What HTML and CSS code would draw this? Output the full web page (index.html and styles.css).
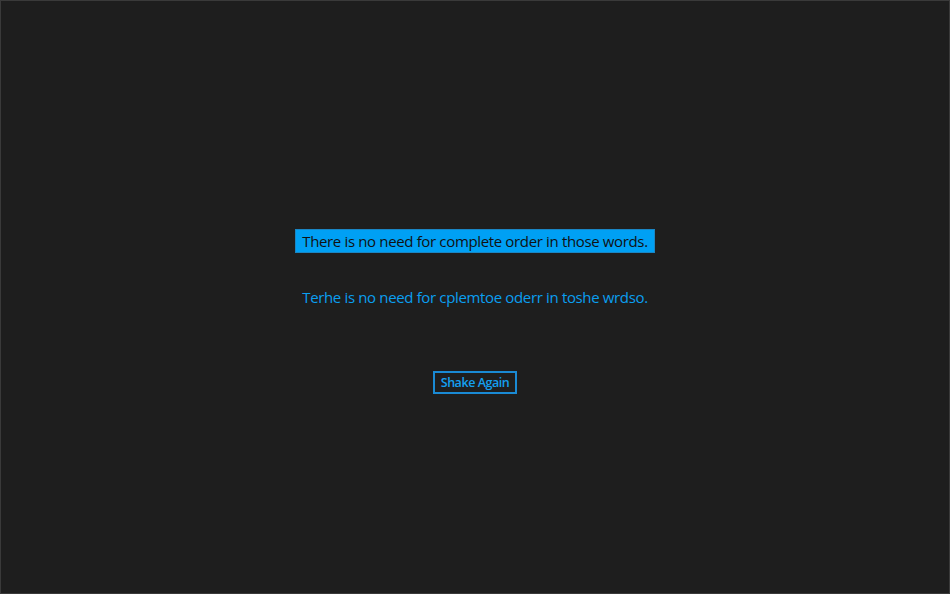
FILE: index.html
```html
<!DOCTYPE html>
<html>
<head>
<meta charset="utf-8">
<link rel="stylesheet" href="styles.css">
</head>
<body>
<main class="app">
  <div class="original">There is no need for complete order in those words.</div>
  <div class="shaken">Terhe is no need for cplemtoe oderr in toshe wrdso.</div>
  <button class="shake">Shake Again</button>
</main>
</body>
</html>
```
FILE: styles.css
```css
html, body {
  margin: 0;
  padding: 0;
  background: #1e1e1e;
}
.app {
  box-sizing: border-box;
  width: 950px;
  height: 594px;
  border: 1px solid #3a3a3a;
  background: #1e1e1e;
  display: flex;
  flex-direction: column;
  align-items: center;
  padding-top: 228px;
  font-family: "Open Sans", "Noto Sans", sans-serif;
}
.original {
  box-sizing: border-box;
  height: 24px;
  line-height: 22px;
  padding: 0 6px;
  background: #00a0f4;
  border: 1px solid #1a86c4;
  color: #111;
  font-size: 15px;
  letter-spacing: -0.35px;
}
.shaken {
  margin-top: 33px;
  height: 22px;
  line-height: 22px;
  color: #0a9ff0;
  font-size: 15px;
  letter-spacing: -0.35px;
}
.shake {
  margin-top: 63px;
  box-sizing: border-box;
  width: 84px;
  height: 23px;
  padding: 0;
  background: transparent;
  border: 2px solid #1a8ad4;
  color: #14a0f0;
  font-family: "Open Sans", "Noto Sans", sans-serif;
  font-weight: 600;
  font-size: 12.5px;
  letter-spacing: -0.45px;
  line-height: 19px;
}
```
